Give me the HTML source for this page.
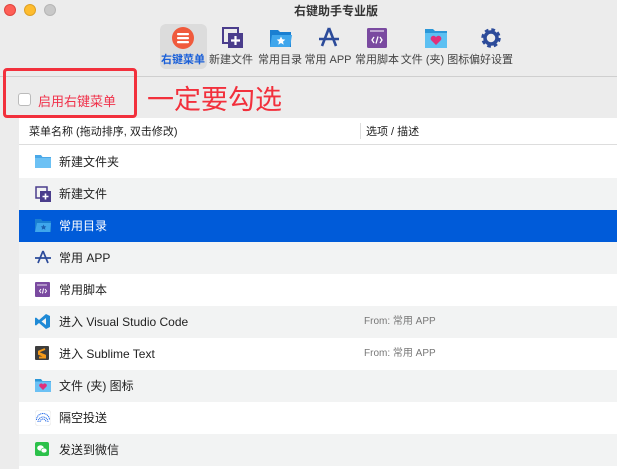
<!DOCTYPE html>
<html><head><meta charset="utf-8"><style>
*{margin:0;padding:0;box-sizing:border-box}
body{width:617px;height:469px;overflow:hidden;background:#ececec;font-family:"Liberation Sans","Noto Sans CJK SC",sans-serif;position:relative;color:#222}
.a{position:absolute}
.tl{width:12px;height:12px;border-radius:50%;top:4px}
.lbl{font-size:11px;color:#444;top:51px;width:70px;text-align:center;white-space:nowrap}
.ic{top:27px}
.row{position:absolute;left:19px;width:598px;height:32px;font-size:12px;line-height:32px}
.row .t{position:absolute;left:40px}
.row .d{position:absolute;left:345px;font-size:10px;color:#777}
.row svg{position:absolute;left:16px;top:8px}
.g{background:#f2f3f3}.w{background:#fff}
</style></head><body>
<div class="a tl" style="left:4px;background:#fe5f57;border:1px solid #e0443e"></div>
<div class="a tl" style="left:24px;background:#febc2e;border:1px solid #dea123"></div>
<div class="a tl" style="left:44px;background:#c8c8c8;border:1px solid #b5b5b5"></div>
<div class="a" style="left:0;width:617px;top:2px;text-align:center;font-size:12px;font-weight:bold;color:#333;padding-left:55px">右键助手专业版</div>

<div class="a" style="left:160px;top:24px;width:47px;height:45px;background:#dcdcdc;border-radius:6px"></div>
<svg class="a ic" style="left:172px" width="22" height="22"><circle cx="11" cy="11" r="11" fill="#f05a3c"/><rect x="5" y="6" width="12" height="2.2" rx="1" fill="#fff"/><rect x="5" y="10" width="12" height="2.2" rx="1" fill="#fff"/><rect x="5" y="14" width="12" height="2.2" rx="1" fill="#fff"/></svg>
<div class="a lbl" style="left:148px;color:#1a5fd8;font-weight:bold">右键菜单</div>
<svg class="a ic" style="left:222px" width="22" height="22"><rect x="1" y="1" width="15" height="15" fill="none" stroke="#4a3d8c" stroke-width="2"/><rect x="6" y="6" width="15" height="15" fill="#4a3d8c"/><path d="M13.5 9v9M9 13.5h9" stroke="#fff" stroke-width="2.2"/></svg>
<div class="a lbl" style="left:196px">新建文件</div>
<svg class="a ic" style="left:269px" width="24" height="22"><path d="M1 3h8l2 2h11v15H1z" fill="#1a7fd1"/><path d="M3 8h20l-2 12H1z" fill="#3fa6ec"/><path d="M12 9.5l1.3 2.8 3 .3-2.3 2 .7 3-2.7-1.6-2.7 1.6.7-3-2.3-2 3-.3z" fill="#fff"/></svg>
<div class="a lbl" style="left:245px">常用目录</div>
<svg class="a ic" style="left:317px" width="24" height="22"><path d="M12 1L5 19M12 1l7 18M2 12h20" stroke="#2c4b9a" stroke-width="2.6" fill="none"/></svg>
<div class="a lbl" style="left:293px">常用 APP</div>
<svg class="a ic" style="left:366px" width="22" height="22"><rect x="1" y="1" width="20" height="20" rx="1.5" fill="#7a4aa0"/><path d="M4 4h14" stroke="#fff" stroke-width="1"/><path d="M8 10l-2 3 2 3M14 10l2 3-2 3M12 9.5l-2 7" stroke="#fff" stroke-width="1.3" fill="none"/></svg>
<div class="a lbl" style="left:342px">常用脚本</div>
<svg class="a ic" style="left:424px" width="24" height="22"><path d="M1 2h8l2 2h12v17H1z" fill="#2a97d8"/><rect x="1" y="6" width="22" height="15" fill="#5cc0f2"/><path d="M12 18l-5-5a2.5 2.5 0 015-2.8 2.5 2.5 0 015 2.8z" fill="#e0307a"/></svg>
<div class="a lbl" style="left:400px">文件 (夹) 图标</div>
<svg class="a ic" style="left:480px" width="22" height="22"><circle cx="11" cy="11" r="7.5" fill="none" stroke="#2c4b9a" stroke-width="4.5" stroke-dasharray="3.3 2.6"/><circle cx="11" cy="11" r="6" fill="none" stroke="#2c4b9a" stroke-width="3.5"/></svg>
<div class="a lbl" style="left:456px">偏好设置</div>

<div class="a" style="left:0;top:76px;width:617px;height:1px;background:#cfcfcf"></div>
<div class="a" style="left:3px;top:68px;width:134px;height:50px;border:3px solid #f2303c;border-radius:4px"></div>
<div class="a" style="left:18px;top:93px;width:13px;height:13px;background:#fff;border:1px solid #bbb;border-radius:3px"></div>
<div class="a" style="left:38px;top:91px;font-size:13px;color:#f0314a">启用右键菜单</div>
<div class="a" style="left:147px;top:84px;font-size:27px;color:#f2303c;line-height:32px">一定要勾选</div>

<div class="a" style="left:19px;top:118px;width:598px;height:351px;background:#fff"></div>
<div class="a" style="left:19px;top:144px;width:598px;height:1px;background:#ddd"></div>
<div class="a" style="left:29px;top:123px;font-size:11px;color:#222">菜单名称 (拖动排序, 双击修改)</div>
<div class="a" style="left:360px;top:123px;width:1px;height:16px;background:#ddd"></div>
<div class="a" style="left:366px;top:123px;font-size:11px;color:#222">选项 / 描述</div>

<div class="row w" style="top:146px"><svg width="16" height="14"><path d="M0 1h6l1.5 2H16v11H0z" fill="#4aa8e8"/><rect y="4" width="16" height="10" fill="#6cc1f4"/></svg><span class="t">新建文件夹</span></div>
<div class="row g" style="top:178px"><svg width="16" height="16"><rect x="1" y="1" width="11" height="11" fill="none" stroke="#4a3d8c" stroke-width="1.5"/><rect x="5" y="5" width="11" height="11" fill="#4a3d8c"/><path d="M10.5 7.5v6M7.5 10.5h6" stroke="#fff" stroke-width="1.6"/></svg><span class="t">新建文件</span></div>
<div class="row" style="top:210px;background:#005bd9;color:#fff"><svg width="16" height="14"><path d="M0 1h6l1.5 2H16v11H0z" fill="#1a7fd1"/><path d="M2 5h14l-1 9H0z" fill="#3fa6ec"/><path d="M8.5 6.5l.9 1.8 2 .2-1.5 1.3.5 2-1.9-1-1.8 1 .5-2-1.5-1.3 2-.2z" fill="#1a5fb0"/></svg><span class="t">常用目录</span></div>
<div class="row g" style="top:242px"><svg width="16" height="14"><path d="M8 1L3 13M8 1l5 12M0 8h16" stroke="#2c4b9a" stroke-width="1.7" fill="none"/></svg><span class="t">常用 APP</span></div>
<div class="row w" style="top:274px"><svg width="15" height="15"><rect width="15" height="15" rx="1" fill="#7a4aa0"/><path d="M2 3h10" stroke="#fff" stroke-width=".8"/><path d="M6 7l-1.5 2 1.5 2M10 7l1.5 2-1.5 2M8.5 6.5l-1 5" stroke="#fff" stroke-width="1" fill="none"/></svg><span class="t">常用脚本</span></div>
<div class="row g" style="top:306px"><svg width="15" height="15"><path d="M11 0l4 2v11l-4 2-7-6-3 2.5L0 11V4l1-.5 3 2.5z" fill="#1f8ad6"/><path d="M11 4L6.5 7.5 11 11z" fill="#f2f3f3"/></svg><span class="t">进入 Visual Studio Code</span><span class="d">From: 常用 APP</span></div>
<div class="row w" style="top:338px"><svg width="15" height="15"><rect width="14" height="14" rx="1" fill="#3d3d3d"/><path d="M10 3L4 5.5v2.5l6 2.5v0M4 7l6 2.5v2L4 11.5" stroke="#f59a1a" stroke-width="2" fill="none"/></svg><span class="t">进入 Sublime Text</span><span class="d">From: 常用 APP</span></div>
<div class="row g" style="top:370px"><svg width="16" height="14"><path d="M0 1h6l1.5 2H16v11H0z" fill="#2a97d8"/><rect y="3.5" width="16" height="10.5" fill="#6cc1f4"/><path d="M8 12L4.5 8.5a1.8 1.8 0 013.5-2 1.8 1.8 0 013.5 2z" fill="#e0307a"/></svg><span class="t">文件 (夹) 图标</span></div>
<div class="row w" style="top:402px"><svg width="16" height="16"><rect width="16" height="16" rx="4" fill="#fff" stroke="#eee"/><path d="M3 12a5 5 0 0110 0M5 12a3 3 0 016 0M1.5 10a6.5 6.5 0 0113 0" stroke="#2a6ee8" stroke-width="1" fill="none" stroke-dasharray="1.2 .6"/></svg><span class="t">隔空投送</span></div>
<div class="row g" style="top:434px"><svg width="15" height="15"><rect width="14" height="14" rx="2" fill="#2cc14a"/><ellipse cx="5.5" cy="6" rx="3.3" ry="2.7" fill="#fff"/><ellipse cx="9" cy="8.5" rx="3" ry="2.4" fill="#fff" stroke="#2cc14a" stroke-width=".6"/></svg><span class="t">发送到微信</span></div>
</body></html>
